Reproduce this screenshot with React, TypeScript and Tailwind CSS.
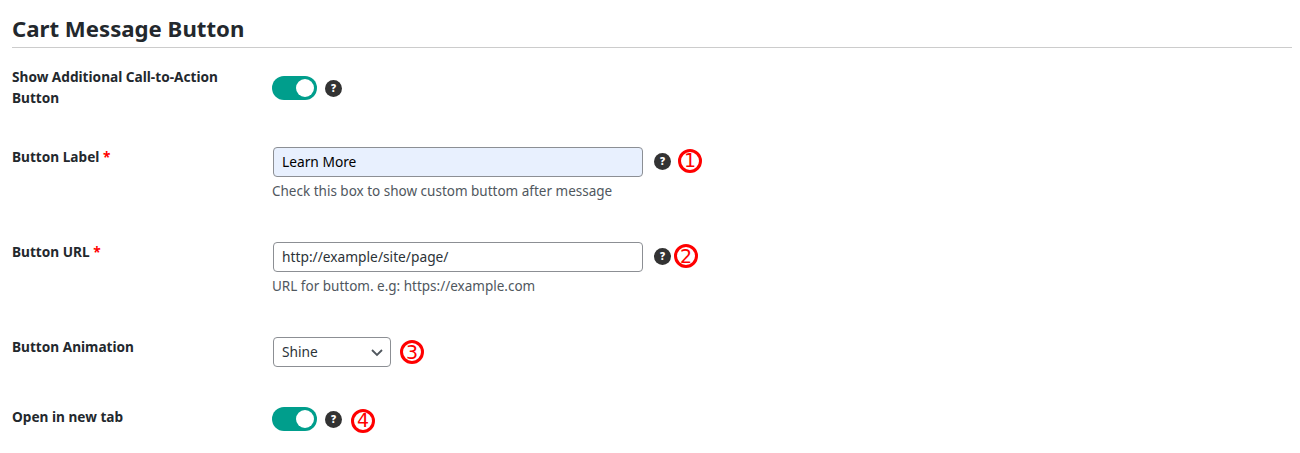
const font = "[font-family:'Noto_Sans',sans-serif]";

function Help({ className = "" }: { className?: string }) {
  return (
    <span className={`flex h-[17px] w-[17px] shrink-0 items-center justify-center rounded-full bg-[#333333] text-[10px] font-black leading-none text-white ${className}`}>
      ?
    </span>
  );
}

function Toggle() {
  return (
    <span className="flex h-6 w-[45px] shrink-0 items-center justify-end rounded-full bg-[#009e8c] pr-[3px]">
      <span className="h-[18px] w-[18px] rounded-full bg-white" />
    </span>
  );
}

function Mark({ n, className = "" }: { n: number; className?: string }) {
  return (
    <span className={`flex h-6 w-6 shrink-0 items-center justify-center rounded-full border-[3px] border-[#ff0000] [font-family:'DejaVu_Sans',sans-serif] text-[19px] leading-none text-[#ff0000] ${className}`}>
      {n}
    </span>
  );
}

function Label({ children, required, className = "" }: { children: React.ReactNode; required?: boolean; className?: string }) {
  return (
    <div className={`-mt-px w-[260px] shrink-0 pr-8 text-[13.65px] font-bold leading-[21px] text-[#23282d] ${className}`}>
      {children}
      {required && <span className="text-[#ff0000]"> *</span>}
    </div>
  );
}

function TextField({ value, hint, filled, mark }: { value: string; hint: string; filled?: boolean; mark: React.ReactNode }) {
  return (
    <div>
      <div className="flex items-center">
        <input
          readOnly
          value={value}
          className={`ml-px h-[30px] w-[370px] rounded-[4px] border border-[#8c8f94] px-2 pb-[2px] text-[13.75px] text-[#2c3338] outline-none ${filled ? "bg-[#e8f0fe] text-black" : "bg-white"}`}
        />
        <Help className="mb-[2px] ml-[11px]" />
        {mark}
      </div>
      <p className="mt-[4px] text-[13.5px] leading-5 text-[#50575e]">{hint}</p>
    </div>
  );
}

export default function App() {
  return (
    <div className={`h-[453px] overflow-hidden bg-white pl-3 pr-2 pt-[14px] ${font}`}>
      <h2 className="border-b border-[#cccccc] pb-[3px] text-[22.2px] font-bold leading-[30px] text-[#23282d]">
        Cart Message Button
      </h2>

      <div className="mt-[19px] flex h-[75px]">
        <Label>Show Additional Call-to-Action Button</Label>
        <div className="mt-[9px] flex h-6 items-center">
          <Toggle />
          <Help className="ml-2" />
        </div>
      </div>

      <div className="mt-[5px] flex h-[90px]">
        <Label required>Button Label</Label>
        <TextField value="Learn More" hint="Check this box to show custom buttom after message" filled mark={<Mark n={1} className="mb-[3px] ml-[7px]" />} />
      </div>

      <div className="mt-[5px] flex h-[90px]">
        <Label required>Button URL</Label>
        <TextField value="http://example/site/page/" hint="URL for buttom. e.g: https://example.com" mark={<Mark n={2} className="mb-[2px] ml-[3px]" />} />
      </div>

      <div className="mt-[5px] flex h-[65px]">
        <Label>Button Animation</Label>
        <div className="flex h-[30px] items-center">
          <div className="ml-px flex h-[30px] w-[118px] items-center justify-between rounded-[4px] border border-[#8c8f94] bg-white pl-2 pr-[6px] text-[13.75px] text-[#2c3338]">
            <span>Shine</span>
            <svg width="14" height="14" viewBox="0 0 14 14" fill="none" stroke="#50575e" strokeWidth="1.8">
              <path d="M2 5l5 5 5-5" />
            </svg>
          </div>
          <Mark n={3} className="ml-[9px]" />
        </div>
      </div>

      <div className="flex">
        <Label className="pt-[5px]">Open in new tab</Label>
        <div className="mt-[5px] flex h-6 items-center">
          <Toggle />
          <Help className="ml-2" />
          <Mark n={4} className="ml-[9px] mt-[3px]" />
        </div>
      </div>
    </div>
  );
}
